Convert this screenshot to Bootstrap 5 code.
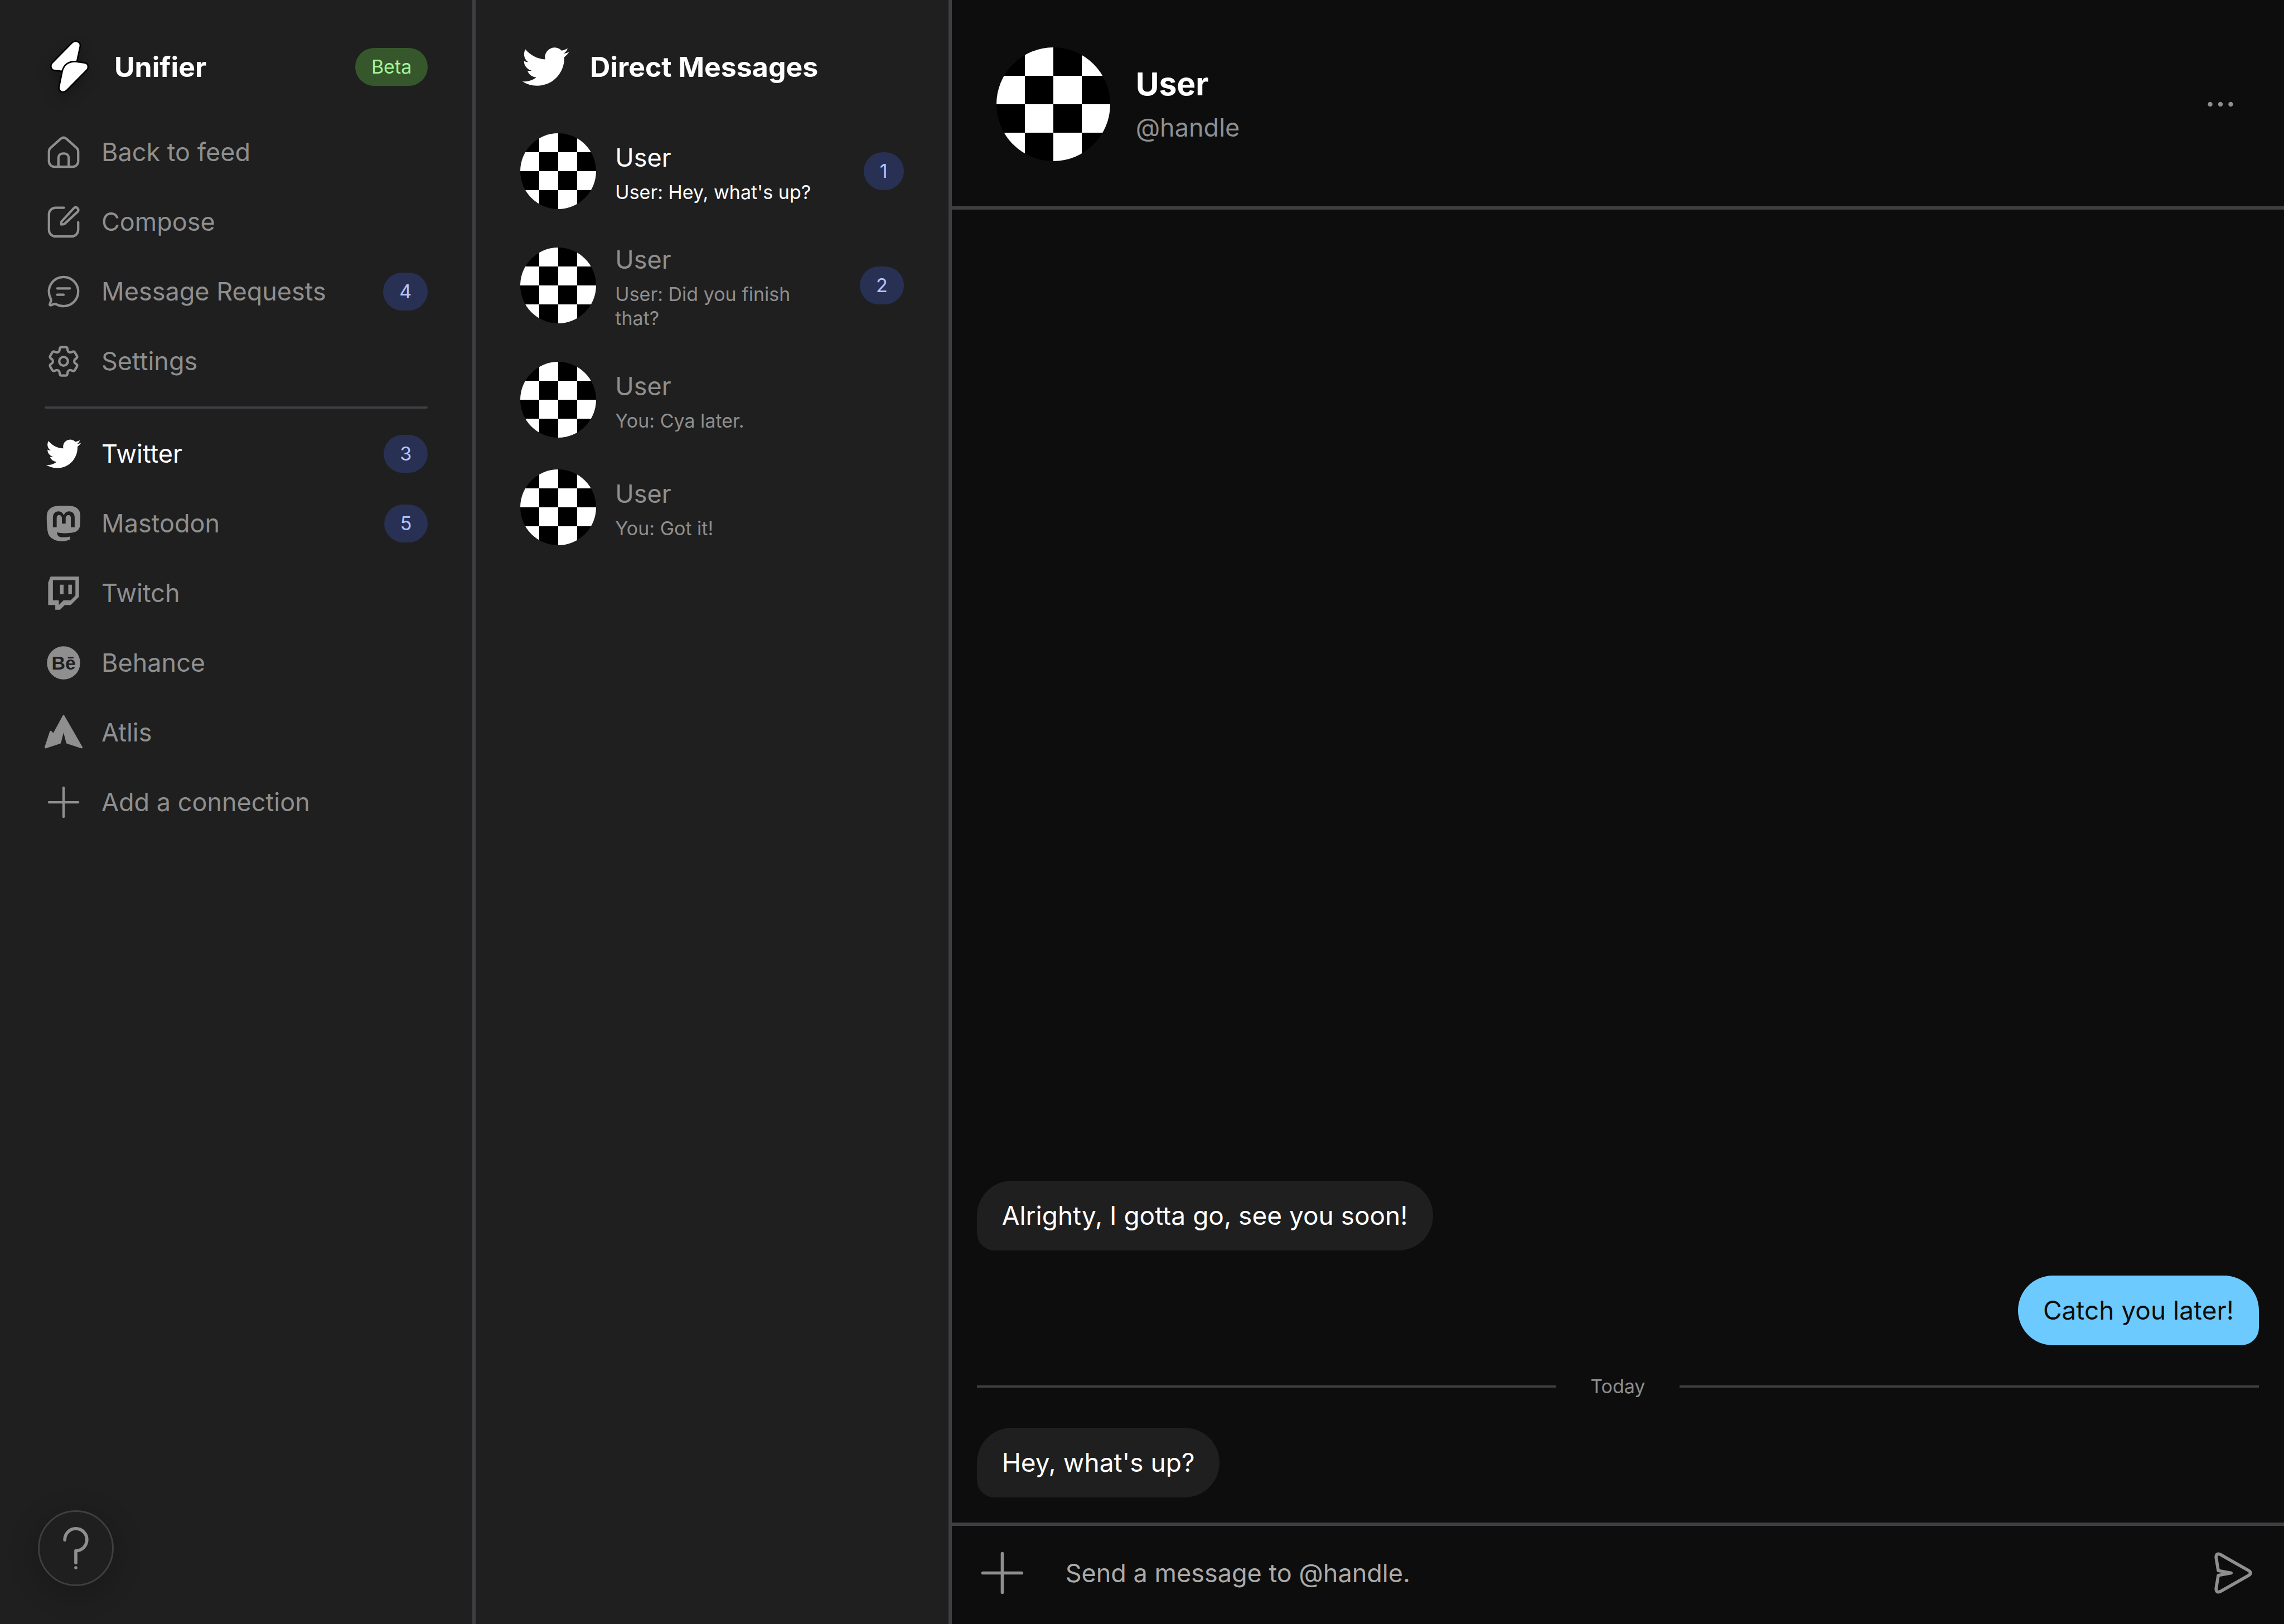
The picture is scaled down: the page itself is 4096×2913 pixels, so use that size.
<!DOCTYPE html>
<html lang="en">
<head>
<meta charset="utf-8">
<meta name="viewport" content="width=device-width, initial-scale=1">
<title>Unifier</title>
<link href="https://cdn.jsdelivr.net/npm/bootstrap@5.3.0/dist/css/bootstrap.min.css" rel="stylesheet">
<script src="https://cdn.jsdelivr.net/npm/bootstrap@5.3.0/dist/js/bootstrap.bundle.min.js"></script>
<style>
  body { font-family: Inter, "Liberation Sans", sans-serif; font-size: 45px; line-height: 68px; color: #8f8f8f; background: #0d0d0d; }
  .panel { flex: 0 0 calc(100% / 4.8); min-width: 0; padding: 74px 80px 68px; background: #1f1f1f; border-right: 6px solid #3e3e43; }
  .panel-title { gap: 34px; height: 91px; color: #fff; }
  .panel-title h1, .panel-title h2 { margin: 0; font-size: 50px; line-height: 68px; font-weight: 700; }
  .icon-md { flex: none; width: 68px; height: 68px; }
  .icon-lg { flex: none; width: 91px; height: 91px; overflow: visible; }
  .line-art { fill: none; stroke: currentColor; stroke-width: 1.5; stroke-linecap: round; stroke-linejoin: round; }
  .logo-mark { filter: drop-shadow(0 11px 11px rgba(0, 0, 0, .25)); }
  .tag { flex: none; padding: 0 29px; border-radius: 34px; font-size: 34px; line-height: 68px; }
  .tag-count { background: #283154; color: #b9c4ff; }
  .tag-beta { background: #36572c; color: #a5f39b; }
  .menu-main { margin-top: 45px; }
  .menu-link { display: flex; align-items: center; gap: 34px; height: 125px; color: inherit; text-decoration: none; }
  .menu-link:hover, .menu-link.active, .thread:hover, .thread.active { color: #fff; }
  .menu-rule { height: 4px; margin: 19px 0 18px; border: 0; border-radius: 2px; background: #3e3e43; opacity: 1; }
  .thread-list { gap: 57px; margin-top: 74px; }
  .thread { display: flex; align-items: center; gap: 34px; color: inherit; text-decoration: none; }
  .thread-body { display: flex; flex-direction: column; gap: 6px; min-width: 0; max-width: 380px; }
  .thread-text { font-size: 34px; line-height: 43px; }
  .avatar { flex: none; width: 136px; height: 136px; border-radius: 50%; background: repeating-conic-gradient(#fff 0 25%, #000 0 50%) 0 0 / 50% 50%; }
  .avatar-lg { width: 204px; height: 204px; }
  .chat-head { gap: 46px; padding: 85px 80px 81px; border-bottom: 6px solid #3e3e43; }
  .chat-name { margin: 0; font-size: 57px; line-height: 80px; font-weight: 700; color: #fff; }
  .chat-id { display: flex; flex-direction: column; gap: 4px; }
  .chat-log { gap: 45px; padding: 45px; }
  .bubble { max-width: 80%; padding: 28px 45px 29px; font-size: 46px; color: #fff; background: #1f1f1f; border-radius: 68px 68px 68px 34px; }
  .bubble-own { color: #0d0d0d; background: #6dcaff; border-radius: 68px 68px 34px 68px; }
  .day-rule { gap: 62px; font-size: 34px; line-height: 58px; }
  .day-rule hr { height: 4px; margin: 0; border: 0; background: #3e3e43; opacity: 1; }
  .composer { gap: 68px; padding: 39px 45px 46px; border-top: 6px solid #3e3e43; }
  .composer-input { min-width: 0; padding: 0; border: 0; outline: 0; background: none; color: #fff; font-size: 45px; line-height: 68px; }
  .composer-input::placeholder { color: #ababab; opacity: 1; }
  .icon-btn { display: flex; padding: 0; border: 0; background: none; color: inherit; }
  .help-btn { left: 68px; bottom: 68px; width: 136px; height: 136px; border: 3px solid #3e3e43; border-radius: 50%; background: #1f1f1f; box-shadow: 0 11px 46px 11px rgba(0, 0, 0, .15); }
  .help-btn svg { width: 136px; height: 136px; margin: -3px; flex: none; }
</style>
</head>
<body>
<svg class="d-none">
  <symbol id="bird" viewBox="-1 -1 26 26"><path fill="currentColor" d="M23.953 4.57a10 10 0 01-2.825.775 4.958 4.958 0 002.163-2.723c-.951.555-2.005.959-3.127 1.184a4.92 4.92 0 00-8.384 4.482C7.69 8.095 4.067 6.13 1.64 3.162a4.822 4.822 0 00-.666 2.475c0 1.71.87 3.213 2.188 4.096a4.904 4.904 0 01-2.228-.616v.06a4.923 4.923 0 003.946 4.827 4.996 4.996 0 01-2.212.085 4.936 4.936 0 004.604 3.417 9.867 9.867 0 01-6.102 2.105c-.39 0-.779-.023-1.17-.067a13.995 13.995 0 007.557 2.209c9.053 0 13.998-7.496 13.998-13.985 0-.21 0-.42-.015-.63A9.935 9.935 0 0024 4.59z"/></symbol>
</svg>
<div class="d-flex min-vh-100">

  <aside class="panel position-relative">
    <div class="panel-title d-flex align-items-center">
      <svg class="icon-lg logo-mark" viewBox="36 72 384 384" fill="#fff" stroke="#000" stroke-width="11" stroke-linejoin="round">
        <path d="M95 234 244 83C268 60 312 76 305 112L281 224 165 299 112 293C84 290 74 256 95 234Z"/>
        <path d="M170 296C182 248 222 222 272 226L338 235C366 239 374 270 354 291L205 442C180 468 138 454 145 418Z"/>
      </svg>
      <h1>Unifier</h1>
      <span class="tag tag-beta ms-auto">Beta</span>
    </div>

    <nav class="menu-main" aria-label="Main">
      <a class="menu-link" href="#">
        <svg class="icon-md line-art" viewBox="0 0 24 24"><path d="M2.75 11.6Q2.75 10.2 3.8 9.2L10.2 3.5Q12 2 13.8 3.5L20.2 9.2Q21.25 10.2 21.25 11.6V17.75a3.5 3.5 0 0 1-3.5 3.5H6.25a3.5 3.5 0 0 1-3.5-3.5Z"/><path d="M8.75 21.25V15.5a2.7 2.7 0 0 1 2.7-2.7h1.1a2.7 2.7 0 0 1 2.7 2.7v5.75"/></svg>
        <span>Back to feed</span>
      </a>
      <a class="menu-link" href="#">
        <svg class="icon-md line-art" viewBox="0 0 24 24"><path d="M12.25 3H7a4.25 4.25 0 0 0-4.25 4.25v9.75A4.25 4.25 0 0 0 7 21.25h10A4.25 4.25 0 0 0 21.25 17V12.2"/><path d="M10.7 11.8 18.4 3.4Q19.6 2.2 20.8 3.3 21.9 4.6 20.7 5.8L12.8 13.1Q12.2 13.6 10.5 13.6 10.4 12.3 10.7 11.8Z"/></svg>
        <span>Compose</span>
      </a>
      <a class="menu-link" href="#">
        <svg class="icon-md line-art" viewBox="0 0 24 24"><path d="M12 2.75a9.25 9.25 0 1 1 0 18.5c-1.7 0-3.2-.4-4.6-1.2-.5-.3-1.1-.3-1.6-.1l-1.8.7c-.5.2-.9-.2-.7-.7l.7-1.9c.2-.6.1-1.2-.2-1.7A9.25 9.25 0 0 1 12 2.75Z"/><path d="M8 10h8M8 14h4"/></svg>
        <span>Message Requests</span>
        <span class="tag tag-count ms-auto">4</span>
      </a>
      <a class="menu-link" href="#">
        <svg class="icon-md line-art" viewBox="0 0 24 24"><path d="M9.594 3.94c.09-.542.56-.94 1.11-.94h2.593c.55 0 1.02.398 1.11.94l.213 1.281c.063.374.313.686.645.87.074.04.147.083.22.127.325.196.72.257 1.075.124l1.217-.456a1.125 1.125 0 0 1 1.37.49l1.296 2.247a1.125 1.125 0 0 1-.26 1.431l-1.003.827c-.293.241-.438.613-.43.992a7.723 7.723 0 0 1 0 .255c-.008.378.137.75.43.991l1.004.827c.424.35.534.955.26 1.43l-1.298 2.247a1.125 1.125 0 0 1-1.369.491l-1.217-.456c-.355-.133-.75-.072-1.076.124a6.47 6.47 0 0 1-.22.128c-.331.183-.581.495-.644.869l-.213 1.281c-.09.543-.56.94-1.11.94h-2.594c-.55 0-1.019-.398-1.11-.94l-.213-1.281c-.062-.374-.312-.686-.644-.87a6.52 6.52 0 0 1-.22-.127c-.325-.196-.72-.257-1.076-.124l-1.217.456a1.125 1.125 0 0 1-1.369-.49l-1.297-2.247a1.125 1.125 0 0 1 .26-1.431l1.004-.827c.292-.24.437-.613.43-.991a6.932 6.932 0 0 1 0-.255c.007-.38-.138-.751-.43-.992l-1.004-.827a1.125 1.125 0 0 1-.26-1.43l1.297-2.247a1.125 1.125 0 0 1 1.37-.491l1.216.456c.356.133.751.072 1.076-.124.072-.044.146-.086.22-.128.332-.183.582-.495.644-.869l.214-1.28Z"/><circle cx="12" cy="12" r="2.75"/></svg>
        <span>Settings</span>
      </a>
    </nav>
    <hr class="menu-rule">
    <nav aria-label="Connections">
      <a class="menu-link active" href="#">
        <svg class="icon-md"><use href="#bird"/></svg>
        <span>Twitter</span>
        <span class="tag tag-count ms-auto">3</span>
      </a>
      <a class="menu-link" href="#">
        <svg class="icon-md" viewBox="-.77 -.8 25.6 25.6" fill="currentColor"><path d="M23.268 5.313c-.35-2.578-2.617-4.61-5.304-5.004C17.51.242 15.792 0 11.813 0h-.03c-3.98 0-4.835.242-5.288.309C3.882.692 1.496 2.518.917 5.127.64 6.412.61 7.837.661 9.143c.074 1.874.088 3.745.26 5.611.118 1.24.325 2.47.62 3.68.55 2.237 2.777 4.098 4.96 4.857 2.336.792 4.849.923 7.256.38.265-.061.527-.132.786-.213.585-.184 1.27-.39 1.774-.753a.057.057 0 0 0 .023-.043v-1.809a.052.052 0 0 0-.02-.041.053.053 0 0 0-.046-.01 20.282 20.282 0 0 1-4.709.545c-2.73 0-3.463-1.284-3.674-1.818a5.593 5.593 0 0 1-.319-1.433.053.053 0 0 1 .066-.054c1.517.363 3.072.546 4.632.546.376 0 .75 0 1.125-.01 1.57-.044 3.224-.124 4.768-.422.038-.008.077-.015.11-.024 2.435-.464 4.753-1.92 4.989-5.604.008-.145.03-1.52.03-1.67.002-.512.167-3.63-.024-5.545zm-3.748 9.195h-2.561V8.29c0-1.309-.55-1.976-1.67-1.976-1.23 0-1.846.79-1.846 2.35v3.403h-2.546V8.663c0-1.56-.617-2.35-1.848-2.35-1.112 0-1.668.668-1.67 1.977v6.218H4.822V8.102c0-1.31.337-2.35 1.011-3.12.696-.77 1.608-1.164 2.74-1.164 1.311 0 2.302.5 2.962 1.498l.638 1.06.638-1.06c.66-.999 1.65-1.498 2.96-1.498 1.13 0 2.043.395 2.74 1.164.675.77 1.012 1.81 1.012 3.12z"/></svg>
        <span>Mastodon</span>
        <span class="tag tag-count ms-auto">5</span>
      </a>
      <a class="menu-link" href="#">
        <svg class="icon-md" viewBox="36 564 288 288" fill="currentColor"><path fill-rule="evenodd" d="M81 582H297V736L234 798H189L153 834H117V798H63V628ZM99 609V762H144V798L180 762H234L270 726V609ZM153 643h27v74h-27ZM216 643h27v74h-27Z"/></svg>
        <span>Twitch</span>
      </a>
      <a class="menu-link" href="#">
        <svg class="icon-md" viewBox="0 0 288 288"><circle cx="144" cy="144" r="126" fill="currentColor"/><text x="145" y="194" text-anchor="middle" font-family="Liberation Sans, sans-serif" font-weight="700" font-size="144" fill="#1f1f1f">Bē</text></svg>
        <span>Behance</span>
      </a>
      <a class="menu-link" href="#">
        <svg class="icon-md" viewBox="0 0 96 96" fill="currentColor" stroke="currentColor" stroke-width="5" stroke-linejoin="round"><path d="M48 6.5 93.5 85.5 57 73.5 48 38 39 73.5 2.5 85.5 15.5 46 22.5 53.5Z"/></svg>
        <span>Atlis</span>
      </a>
      <a class="menu-link" href="#">
        <svg class="icon-md line-art" viewBox="0 0 24 24"><path d="M12 2.75v18.5M2.75 12h18.5"/></svg>
        <span>Add a connection</span>
      </a>
    </nav>
    <button class="help-btn icon-btn position-absolute" type="button" aria-label="Help">
      <svg viewBox="0 0 192 192" fill="none" stroke="currentColor" stroke-width="8" stroke-linecap="round" stroke-linejoin="round"><path d="M68 75A28 28 0 1 1 96 102.5V133"/><circle cx="96" cy="145.5" r="4" fill="currentColor" stroke="none"/></svg>
    </button>
  </aside>

  <section class="panel">
    <div class="panel-title d-flex align-items-center">
      <svg class="icon-lg"><use href="#bird"/></svg>
      <h2>Direct Messages</h2>
    </div>
    <div class="thread-list d-flex flex-column">
      <a class="thread active" href="#">
        <span class="avatar"></span>
        <span class="thread-body"><span>User</span><span class="thread-text">User: Hey, what's up?</span></span>
        <span class="tag tag-count ms-auto">1</span>
      </a>
      <a class="thread" href="#">
        <span class="avatar"></span>
        <span class="thread-body"><span>User</span><span class="thread-text">User: Did you finish that?</span></span>
        <span class="tag tag-count ms-auto">2</span>
      </a>
      <a class="thread" href="#">
        <span class="avatar"></span>
        <span class="thread-body"><span>User</span><span class="thread-text">You: Cya later.</span></span>
      </a>
      <a class="thread" href="#">
        <span class="avatar"></span>
        <span class="thread-body"><span>User</span><span class="thread-text">You: Got it!</span></span>
      </a>
    </div>
  </section>

  <main class="flex-grow-1 d-flex flex-column">
    <header class="chat-head d-flex align-items-center">
      <span class="avatar avatar-lg"></span>
      <div class="chat-id"><h2 class="chat-name">User</h2><span>@handle</span></div>
      <button class="icon-btn ms-auto" type="button" aria-label="More">
        <svg class="icon-md" viewBox="0 0 96 96" fill="currentColor"><circle cx="22" cy="48" r="6"/><circle cx="48" cy="48" r="6"/><circle cx="74" cy="48" r="6"/></svg>
      </button>
    </header>
    <div class="chat-log flex-grow-1 d-flex flex-column justify-content-end">
      <div class="bubble align-self-start">Alrighty, I gotta go, see you soon!</div>
      <div class="bubble bubble-own align-self-end">Catch you later!</div>
      <div class="day-rule d-flex align-items-center"><hr class="flex-grow-1"><span>Today</span><hr class="flex-grow-1"></div>
      <div class="bubble align-self-start">Hey, what's up?</div>
    </div>
    <form class="composer d-flex align-items-center">
      <button class="icon-btn" type="button" aria-label="Attach">
        <svg class="icon-lg" viewBox="0 0 128 128" fill="none" stroke="currentColor" stroke-width="8" stroke-linecap="round"><path d="M64 15v98M15 64h98"/></svg>
      </button>
      <input class="composer-input flex-grow-1" type="text" placeholder="Send a message to @handle." aria-label="Message">
      <button class="icon-btn" type="submit" aria-label="Send">
        <svg class="icon-lg" viewBox="0 0 128 128" fill="none" stroke="currentColor" stroke-width="8" stroke-linejoin="round"><path d="M20 25Q20 13 30 17L103 58.5Q111 64 103 69.5L30 111Q20 115 20 103L25.5 70 58 64 25.5 58Z"/></svg>
      </button>
    </form>
  </main>
</div>
</body>
</html>
